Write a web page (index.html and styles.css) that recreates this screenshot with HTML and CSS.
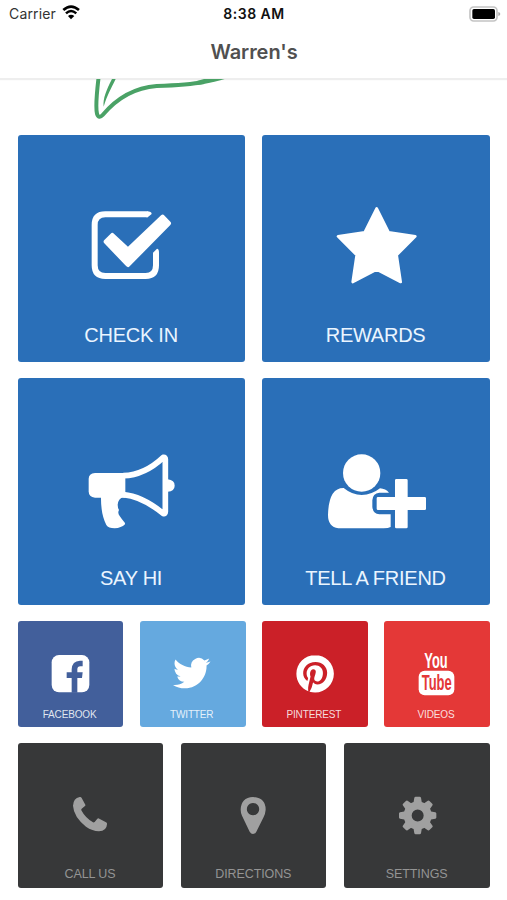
FILE: index.html
```html
<!DOCTYPE html>
<html lang="en">
<head>
  <meta charset="UTF-8" />
  <meta name="viewport" content="width=device-width, initial-scale=1.0" />
  <title>Warren's</title>
  <link rel="stylesheet" href="styles.css">
</head>
<body>
  <header class="topbar">
    <div class="status">
      <div class="carrier">
        <span>Carrier</span>
        <svg class="wifi" viewBox="186 16 55 44">
          <path d="M190 31Q213 10 237 31" fill="none" stroke="#000" stroke-width="8"/>
          <path d="M198 41Q213 27 229 41" fill="none" stroke="#000" stroke-width="7.500"/>
          <path d="M213 59L204 49Q213 42 223 49Z"/>
        </svg>
      </div>
      <div class="clock">8:38 AM</div>
      <div class="power">
        <svg class="battery" viewBox="638 15 96 48">
          <rect x="641" y="18" width="81" height="42" rx="11" fill="#fff" stroke="#c4c4c4" stroke-width="5"/>
          <rect x="648" y="24" width="68" height="30" rx="5"/>
          <path d="M726 33q6 2 6 6t-6 6z" fill="#aaa"/>
        </svg>
      </div>
    </div>
    <h1 class="title">Warren's</h1>
  </header>

  <div class="logo">
    <svg viewBox="0 237 750 168">
      <g fill="#4aa266">
        <path d="M296 230C290 280 287 325 291 341C294 352 301 353 308 345C350 295 405 263 470 258C530 256 570 254 612 246" fill="none" stroke="#4aa266" stroke-width="12"/>
        <path d="M590 243L612 237H674Q650 244 611 252L590 254Z"/>
        <path d="M336 237H347C332 268 322 285 311 320C308 296 320 268 336 237Z"/>
      </g>
    </svg>
  </div>

  <main class="tiles">
    <!-- Main actions -->
    <div class="row row-large">
      <a class="tile large">
        <svg class="icon" viewBox="199 225 330 270">
          <path d="M414 268H287Q255 268 255 300V421Q255 453 287 453H408Q439 453 439 421V386" fill="none" stroke="#fff" stroke-width="18"/>
          <path d="M412 259Q426 259 426 267L414 277H410ZM430 390V383L442 371Q448 371 448 383V390Z"/>
          <path d="M289 350L308 331L355 375L459 276L477 295L355 419Z" stroke="#fff" stroke-width="14" stroke-linejoin="round"/>
        </svg>
        <span class="label">CHECK IN</span>
      </a>
      <a class="tile large">
        <svg class="icon" viewBox="196 225 330 270">
          <path d="M363 250L399 322L479 334L423 390L435 471L363 434L291 471L303 390L247 334L327 322Z" stroke="#fff" stroke-width="8" stroke-linejoin="round"/>
        </svg>
        <span class="label">REWARDS</span>
      </a>
    </div>

    <div class="row row-large">
      <a class="tile large">
        <svg class="icon" viewBox="199 219 330 270">
          <path d="M256 309H347V383H256Q237 382 237 364V327Q237 310 256 309Z"/>
          <path d="M274 380H342Q325 386 324 404Q324 413 328 420Q323 429 330 438Q336 447 343 455Q347 459 346 463Q335 474 315 475Q296 475 290 465Q273 432 274 380Z"/>
          <path d="M341 317Q405 315 461 262Q467 261 467 268V425Q467 433 460 430Q397 379 341 374" fill="none" stroke="#fff" stroke-width="17" stroke-linejoin="round"/>
          <path d="M474 328Q495 330 495 347T474 365Z"/>
        </svg>
        <span class="label">SAY HI</span>
      </a>
      <a class="tile large">
        <svg class="icon" viewBox="196 219 330 270">
          <circle cx="318" cy="309" r="56"/>
          <path d="M264 354Q290 375 318 375Q349 374 373 355Q390 356 400 368H371Q351 370 350 391V411Q352 431 371 433H405V471Q398 475 384 475H248Q217 471 217 435Q219 353 264 354Z"/>
          <path d="M422 327h30q4 0 4 4v50h51q4 0 4 4v31q0 4-4 4h-51v51q0 4-4 4h-30q-4 0-4-4v-51h-51q-4 0-4-4v-31q0-4 4-4h51v-50q0-4 4-4z"/>
        </svg>
        <span class="label">TELL A FRIEND</span>
      </a>
    </div>

    <!-- Social links -->
    <div class="row row-small">
      <a class="tile small facebook">
        <svg class="icon" viewBox="91 108 180 150">
          <rect x="126" y="135" width="113" height="112" rx="22"/>
          <path class="cutout" d="M186 248V204H171V187H186V178Q187 153 211 152H219V169H212Q203 169 203 178V187H219L217 204H203V248Z"/>
        </svg>
        <span class="label">FACEBOOK</span>
      </a>
      <a class="tile small twitter">
        <svg class="icon" viewBox="457 108 180 150">
          <path transform="translate(490 133.500) scale(4.670)" d="M23.953 4.570a10 10 0 0 1-2.825.775 4.958 4.958 0 0 0 2.163-2.723c-.951.555-2.005.959-3.127 1.184a4.920 4.920 0 0 0-8.384 4.482C7.690 8.095 4.067 6.130 1.640 3.162a4.822 4.822 0 0 0-.666 2.475c0 1.710.87 3.213 2.188 4.096a4.904 4.904 0 0 1-2.228-.616v.06a4.923 4.923 0 0 0 3.946 4.827 4.996 4.996 0 0 1-2.212.085 4.936 4.936 0 0 0 4.604 3.417 9.867 9.867 0 0 1-6.102 2.105c-.39 0-.779-.023-1.170-.067a13.995 13.995 0 0 0 7.557 2.209c9.053 0 13.998-7.496 13.998-13.985 0-.21 0-.42-.015-.63A9.935 9.935 0 0 0 24 4.590z"/>
        </svg>
        <span class="label">TWITTER</span>
      </a>
      <a class="tile small pinterest">
        <svg class="icon" viewBox="87 108 180 150">
          <path transform="translate(124 135) scale(4.700)" d="M12.017 0C5.396 0 .029 5.367.029 11.987c0 5.079 3.158 9.417 7.618 11.162-.105-.949-.199-2.403.041-3.439.219-.937 1.406-5.957 1.406-5.957s-.359-.72-.359-1.781c0-1.663.967-2.911 2.168-2.911 1.024 0 1.518.769 1.518 1.688 0 1.029-.653 2.567-.992 3.992-.285 1.193.6 2.165 1.775 2.165 2.128 0 3.768-2.245 3.768-5.487 0-2.861-2.063-4.869-5.008-4.869-3.410 0-5.409 2.562-5.409 5.199 0 1.033.394 2.143.889 2.741.099.12.112.225.085.345-.09.375-.293 1.199-.334 1.363-.053.225-.172.271-.401.165-1.495-.69-2.433-2.878-2.433-4.646 0-3.776 2.748-7.252 7.920-7.252 4.158 0 7.392 2.967 7.392 6.923 0 4.135-2.607 7.462-6.233 7.462-1.214 0-2.354-.629-2.758-1.379l-.749 2.848c-.269 1.045-1.004 2.352-1.498 3.146 1.123.345 2.306.535 3.550.535 6.607 0 11.985-5.365 11.985-11.987C23.970 5.390 18.592.026 11.985.026z"/>
        </svg>
        <span class="label">PINTEREST</span>
      </a>
      <a class="tile small videos">
        <svg class="icon" viewBox="454 108 180 150">
          <rect x="492" y="182" width="107" height="74" rx="18"/>
          <text class="yt" transform="translate(509 174) scale(.56 1)" textLength="125" lengthAdjust="spacingAndGlyphs">You</text>
          <text class="yt cutout" transform="translate(501 241) scale(.56 1)" textLength="161" lengthAdjust="spacingAndGlyphs">Tube</text>
        </svg>
        <span class="label">VIDEOS</span>
      </a>
    </div>

    <!-- Contact and settings -->
    <div class="row row-medium">
      <a class="tile medium">
        <svg class="icon" viewBox="150 157 180 150">
          <path d="M209 184Q213 183 215 187L226 207Q227 210 224 212L215 219Q213 221 214 224Q226 247 249 260Q252 261 254 259L262 249Q265 247 268 249L288 260Q292 262 291 266Q290 286 267 287Q247 286 228 273Q191 243 189 210Q190 188 209 184Z"/>
        </svg>
        <span class="label">CALL US</span>
      </a>
      <a class="tile medium">
        <svg class="icon" viewBox="640 157 180 150">
          <path fill-rule="evenodd" d="M730 184Q768 186 768 222Q767 234 762 244L740 288Q736 295 730 295Q724 295 720 288L697 240Q693 231 693 222Q694 186 730 184ZM730 202a18.500 18.500 0 1 0 .1 0z"/>
        </svg>
        <span class="label">DIRECTIONS</span>
      </a>
      <a class="tile medium">
        <svg class="icon" viewBox="393 157 180 150">
          <g transform="translate(485 239.500)">
            <circle r="30" fill="none" stroke="#a0a0a0" stroke-width="24"/>
            <path id="teeth" d="M-13-36L-10-53Q-9-56-6-56H6Q9-56 10-53L13-36ZM-13 36L-10 53Q-9 56-6 56H6Q9 56 10 53L13 36Z"/>
            <use href="#teeth" transform="rotate(45)"/>
            <use href="#teeth" transform="rotate(90)"/>
            <use href="#teeth" transform="rotate(135)"/>
          </g>
        </svg>
        <span class="label">SETTINGS</span>
      </a>
    </div>
  </main>
</body>
</html>
```

FILE: styles.css
```css
* { box-sizing: border-box; }
body {
  margin: 0;
  height: 900px;
  overflow: hidden;
  background: #fff;
  font-family: "Liberation Sans", Arial, sans-serif;
}

/* Header */
.topbar {
  height: 79px;
  border-bottom: 1px solid #eee;
  box-shadow: 0 1px 1px #eee;
  font-family: Inter, sans-serif;
}
.status {
  display: flex;
  align-items: center;
  height: 27px;
  padding: 0 6px 0 9px;
  font-size: 14px;
  color: #111;
}
.carrier, .power { flex: 1; display: flex; align-items: center; }
.carrier { gap: 6px; letter-spacing: 0.15px; color: #333; }
.power { justify-content: flex-end; }
.wifi { width: 18.3px; height: 14.7px; margin-top: -2px; }
.battery { width: 32px; height: 16px; }
.clock { margin-right: 2px; font-weight: 600; letter-spacing: 0.5px; }
.title {
  margin: 0;
  padding-left: 1px;
  font-size: 20px;
  font-weight: 600;
  line-height: 51px;
  letter-spacing: -0.05px;
  text-align: center;
  color: #505050;
}

.logo { position: relative; height: 56px; }
.logo svg { display: block; width: 250px; height: 56px; }

/* Tile rows */
.tiles {
  display: flex;
  flex-direction: column;
  gap: 16px;
  padding: 0 17.2px 0 17.8px;
}
.row { display: flex; }
.row-large { gap: 17px; }
.row-small { gap: 16.5px; }
.row-medium { gap: 18px; }

.tile {
  flex: 1;
  display: flex;
  flex-direction: column;
  align-items: center;
  padding-right: 1px;
  border-radius: 3px;
  color: #fff;
  white-space: nowrap;
}
.icon { display: block; flex: none; fill: #fff; }

.large { height: 227px; padding-top: 65px; background: #2a6fb8; }
.large .icon { width: 110px; height: 90px; }
.large .label { margin-top: 33px; font-size: 20px; line-height: 24px; letter-spacing: -0.25px; color: #eaf5ff; }

.small { height: 105.5px; padding-top: 25px; }
.small .icon { width: 60px; height: 50px; }
.small .label { margin-top: 13px; font-size: 10px; line-height: 12px; letter-spacing: -0.15px; padding-right: 1px; color: rgba(255,255,255,0.85); }

.medium { height: 145.5px; padding-top: 45px; background: #373839; }
.medium .icon { width: 60px; height: 50px; fill: #a0a0a0; }
.medium .label { margin-top: 29px; font-size: 12.5px; line-height: 14px; letter-spacing: -0.1px; color: #949494; }

.facebook { background: #425f9b; }
.twitter { background: #65a9df; }
.pinterest { background: #cb2028; }
.videos { background: #e43837; }
.facebook .cutout { fill: #425f9b; }
.videos .cutout { fill: #e43837; }
.yt { font-size: 64px; font-weight: bold; }
```
